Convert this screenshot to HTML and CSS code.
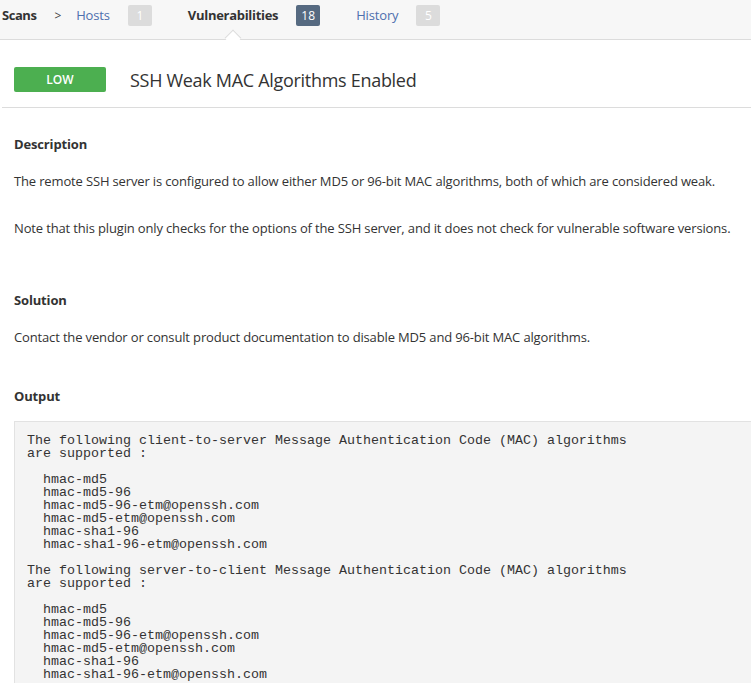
FILE: index.html
```html
<!DOCTYPE html>
<html>
<head>
<meta charset="utf-8">
<link rel="stylesheet" href="styles.css">
</head>
<body>
<nav class="nav">
  <span class="crumb">Scans</span>
  <span class="sep">&gt;</span>
  <a class="tab">Hosts</a>
  <span class="badge badge-light">1</span>
  <span class="tab tab-active">Vulnerabilities</span>
  <span class="badge badge-dark">18</span>
  <a class="tab">History</a>
  <span class="badge badge-light">5</span>
</nav>
<header class="title-row">
  <span class="severity">LOW</span>
  <h1 class="title">SSH Weak MAC Algorithms Enabled</h1>
</header>
<main class="detail">
  <section class="block block-desc">
    <h3 class="heading">Description</h3>
    <p class="text">The remote SSH server is configured to allow either MD5 or 96-bit MAC algorithms, both of which are considered weak.</p>
    <p class="text last">Note that this plugin only checks for the options of the SSH server, and it does not check for vulnerable software versions.</p>
  </section>
  <section class="block block-sol">
    <h3 class="heading">Solution</h3>
    <p class="text last">Contact the vendor or consult product documentation to disable MD5 and 96-bit MAC algorithms.</p>
  </section>
  <section class="block block-out">
    <h3 class="heading heading-out">Output</h3>
<pre class="output">The following client-to-server Message Authentication Code (MAC) algorithms
are supported :

  hmac-md5
  hmac-md5-96
  hmac-md5-96-etm@openssh.com
  hmac-md5-etm@openssh.com
  hmac-sha1-96
  hmac-sha1-96-etm@openssh.com

The following server-to-client Message Authentication Code (MAC) algorithms
are supported :

  hmac-md5
  hmac-md5-96
  hmac-md5-96-etm@openssh.com
  hmac-md5-etm@openssh.com
  hmac-sha1-96
  hmac-sha1-96-etm@openssh.com
</pre>
  </section>
</main>
</body>
</html>
```
FILE: styles.css
```css
html, body {
  margin: 0;
  padding: 0;
  background: #fff;
  overflow: hidden;
}
body {
  font-family: "Open Sans", "Noto Sans", sans-serif;
  font-size: 13px;
  letter-spacing: -0.15px;
  color: #333;
  width: 751px;
  height: 683px;
}
.nav {
  position: relative;
  display: flex;
  align-items: center;
  height: 39px;
  box-sizing: content-box;
  padding: 0 0 0 2px;
  background: #f7f7f7;
  border-bottom: 1px solid #dcdcdc;
}
.nav > * {
  margin-bottom: 9px;
}
.crumb {
  font-weight: 700;
  color: #333;
  font-size: 13px;
  letter-spacing: -0.45px;
}
.sep {
  margin-left: 18px;
  font-size: 12px;
  color: #444;
}
.tab {
  color: #4e6fae;
  font-size: 13px;
}
.sep + .tab {
  margin-left: 15px;
}
.badge {
  display: inline-flex;
  align-items: center;
  justify-content: center;
  width: 24px;
  height: 21px;
  border-radius: 2px;
  color: #fff;
  font-size: 12px;
  letter-spacing: 0;
  margin-left: 18px;
}
.badge-light { background: #dcdcdc; }
.badge-dark { background: #566a81; }
.badge + .tab { margin-left: 36px; }
.tab-active {
  position: relative;
  font-weight: 700;
  color: #333;
  letter-spacing: -0.3px;
}
.tab-active::after {
  content: "";
  position: absolute;
  left: 50%;
  top: 26px;
  width: 11px;
  height: 11px;
  margin-left: -6px;
  background: #fff;
  border-left: 1px solid #dcdcdc;
  border-top: 1px solid #dcdcdc;
  transform: rotate(45deg);
}
.title-row {
  display: flex;
  align-items: center;
  height: 55px;
  padding: 12px 0 0 12px;
  border-bottom: 1px solid #dcdcdc;
  margin-left: 2px;
}
.severity {
  display: inline-flex;
  align-items: center;
  justify-content: center;
  width: 92px;
  height: 25px;
  border-radius: 2px;
  background: #4caf50;
  color: #fff;
  font-size: 12px;
  font-weight: 600;
  letter-spacing: 0;
}
.title {
  margin: 0 0 0 24px;
  font-size: 18px;
  font-weight: 400;
  letter-spacing: -0.3px;
  color: #333;
}
.detail {
  padding: 0 0 0 14px;
}
.heading {
  margin: 0;
  font-size: 13px;
  font-weight: 700;
  line-height: 20px;
  color: #333;
}
.text {
  margin: 17px 0 0;
  line-height: 20px;
}
.text + .text { margin-top: 27px; }
.block-desc { padding-top: 26px; }
.block-sol { padding-top: 52px; }
.block-out { padding-top: 39px; }
.output {
  margin: 15px 0 0;
  padding: 12px 0 10px 12px;
  background: #f4f4f4;
  border-top: 1px solid #e2e2e2;
  border-left: 1px solid #e2e2e2;
  font-family: "Liberation Mono", "Courier New", monospace;
  font-size: 13.33px;
  letter-spacing: 0;
  line-height: 13px;
  color: #333;
}
```
